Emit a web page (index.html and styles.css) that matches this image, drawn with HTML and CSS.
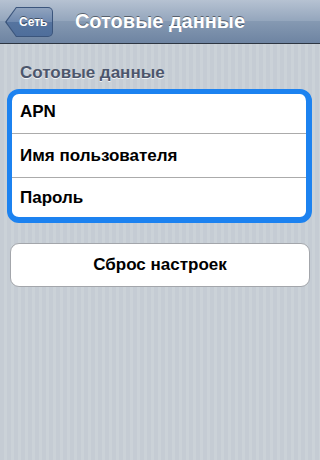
FILE: index.html
```html
<!DOCTYPE html>
<html lang="ru">
<head>
<meta charset="utf-8">
<title>Сотовые данные</title>
<link rel="stylesheet" href="styles.css">
</head>
<body>
<div class="screen">
  <header class="navbar">
    <div class="nav-left">
      <div class="back"><div class="back-inner"><span class="back-label">Сеть</span></div></div>
    </div>
    <h1 class="nav-title">Сотовые данные</h1>
    <div class="nav-right"></div>
  </header>
  <div class="section-header">Сотовые данные</div>
  <div class="group">
    <div class="row row-first">APN</div>
    <div class="row">Имя пользователя</div>
    <div class="row row-last">Пароль</div>
  </div>
  <div class="reset-button">Сброс настроек</div>
</div>
</body>
</html>
```

FILE: styles.css
```css
html, body {
  margin: 0;
  padding: 0;
}
body {
  width: 320px;
  height: 460px;
  overflow: hidden;
  font-family: "Liberation Sans", Arial, sans-serif;
  background: repeating-linear-gradient(90deg, #c5ccd4 0, #c5ccd4 4px, #cbd2d8 4px, #cbd2d8 7px);
}
.screen {
  display: flex;
  flex-direction: column;
}
.navbar {
  height: 43px;
  border-bottom: 1px solid #2d3642;
  background: linear-gradient(#b6c2d2 0, #93a5bc 50%, #8599b2 50%, #6e84a2 100%);
  display: grid;
  grid-template-columns: 1fr auto 1fr;
  align-items: center;
}
.nav-left {
  display: flex;
  padding-left: 5px;
}
.back {
  width: 48px;
  height: 30px;
  margin-top: 1px;
  background: #3b557c;
  border-radius: 0 5px 5px 0;
  clip-path: polygon(11px 0, 100% 0, 100% 100%, 11px 100%, 0 50%);
  display: flex;
}
.back-inner {
  flex: 1;
  margin: 1px 1px 1px 1.5px;
  border-radius: 0 4px 4px 0;
  clip-path: polygon(10px 0, 100% 0, 100% 100%, 10px 100%, 0 50%);
  background: linear-gradient(#90a3be 0, #6f89af 50%, #56749f 50%, #4f6e9b 100%);
  display: flex;
  align-items: center;
  justify-content: center;
  padding-left: 8px;
}
.back-label {
  color: #fff;
  font-weight: bold;
  font-size: 12px;
  text-shadow: 0 -1px 0 rgba(0, 0, 0, 0.45);
}
.nav-title {
  margin: 0;
  color: #fff;
  font-size: 20px;
  font-weight: bold;
  text-shadow: 0 -1px 0 rgba(0, 0, 0, 0.45);
  line-height: 24px;
  padding-bottom: 1px;
}
.section-header {
  padding: 18px 0 0 20px;
  height: 27px;
  font-size: 17px;
  font-weight: bold;
  line-height: 21px;
  color: #4c566c;
  text-shadow: 0 1px 0 rgba(255, 255, 255, 0.8);
}
.group {
  margin: 0 8px 0 7px;
  border: 5px solid #1c82f0;
  border-bottom-width: 6px;
  border-right-width: 6px;
  border-radius: 12px;
  background: #fff;
  overflow: hidden;
}
.row {
  height: 44px;
  box-sizing: border-box;
  border-top: 1px solid #ababab;
  display: flex;
  align-items: center;
  padding-left: 8px;
  font-size: 17px;
  font-weight: bold;
  color: #000;
}
.row-first {
  height: 39px;
  border-top: 0;
  padding-bottom: 3px;
}
.row-last {
  height: 40px;
}
.reset-button {
  margin: 20px 10px 0;
  height: 44px;
  box-sizing: border-box;
  border: 1px solid #a3a6ab;
  border-radius: 9px;
  background: #fff;
  display: flex;
  align-items: center;
  justify-content: center;
  font-size: 17px;
  font-weight: bold;
  color: #000;
}
```
